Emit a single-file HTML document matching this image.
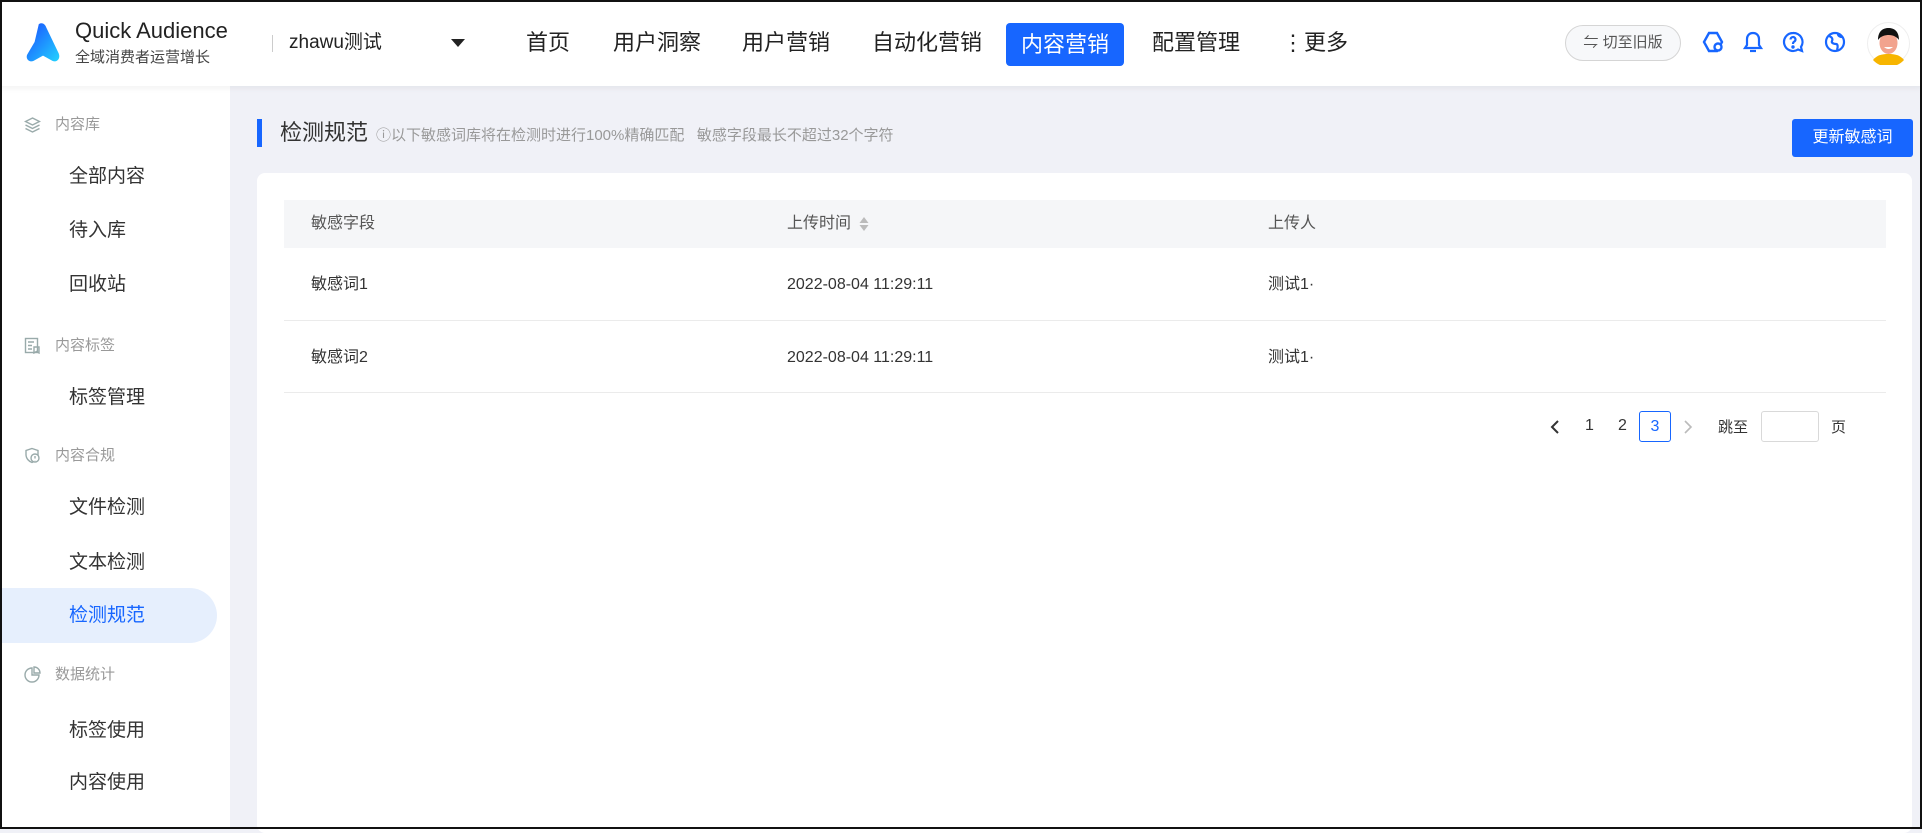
<!DOCTYPE html>
<html><head><meta charset="utf-8"><style>
*{margin:0;padding:0;box-sizing:border-box}
body{width:1922px;height:829px;overflow:hidden;font-family:"Liberation Sans","Noto Sans CJK SC",sans-serif;background:#f0f1f7;position:relative;color:#333}
.frame{position:absolute;inset:0;border:2px solid #111;z-index:50;pointer-events:none}
.hdr{position:absolute;left:0;top:0;width:1922px;height:86px;background:#fff;box-shadow:0 2px 6px rgba(0,0,0,.06);z-index:5}
.a{position:absolute;white-space:nowrap}
.nav{font-size:22px;color:#222;top:27px;line-height:32px}
.side{position:absolute;left:0;top:86px;width:230px;height:743px;background:#fff}
.g{position:absolute;left:55px;font-size:15px;color:#999;line-height:20px}
.gi{position:absolute;left:24px;width:17px;height:17px}
.it{position:absolute;left:69px;font-size:19px;color:#333;line-height:26px}
.card{position:absolute;left:257px;top:173px;width:1655px;height:660px;background:#fff;border-radius:8px}
.th{position:absolute;left:284px;top:200px;width:1602px;height:48px;background:#f5f6f8}
.t{position:absolute;font-size:16px;color:#333;line-height:20px}
.line{position:absolute;left:284px;width:1602px;height:1px;background:#ebebeb}
</style></head><body>
<div class="frame"></div>
<div class="hdr">
<svg class="a" style="left:22px;top:22px" width="42" height="42" viewBox="0 0 34 40"><defs><linearGradient id="lg" x1="0" y1="0" x2="1" y2="1"><stop offset="0" stop-color="#1a4dff"/><stop offset="1" stop-color="#22d3ff"/></linearGradient></defs><path d="M13 2c3-2 6 0 7 3l12 25c2 5-2 9-6 7l-9-5-9 5c-4 2-8-2-6-6l7-12z" fill="url(#lg)"/></svg>
<div class="a" style="left:75px;top:18px;font-size:22px;color:#222;line-height:26px">Quick Audience</div>
<div class="a" style="left:75px;top:48px;font-size:15px;color:#444;line-height:20px">全域消费者运营增长</div>
<div class="a" style="left:272px;top:35px;width:1px;height:17px;background:#ccc"></div>
<div class="a" style="left:289px;top:30px;font-size:19px;color:#222;line-height:26px">zhawu测试</div>
<div class="a" style="left:451px;top:39px;width:0;height:0;border-left:7px solid transparent;border-right:7px solid transparent;border-top:8px solid #222"></div>
<div class="a nav" style="left:526px">首页</div>
<div class="a nav" style="left:613px">用户洞察</div>
<div class="a nav" style="left:742px">用户营销</div>
<div class="a nav" style="left:872px">自动化营销</div>
<div class="a" style="left:1006px;top:23px;width:118px;height:43px;background:#1766ff;border-radius:4px;color:#fff;font-size:22px;text-align:center;line-height:43px">内容营销</div>
<div class="a nav" style="left:1152px">配置管理</div>
<div class="a nav" style="left:1282px">⋮更多</div>
<div class="a" style="left:1565px;top:25px;width:116px;height:36px;border:1px solid #d5d5d5;border-radius:18px;background:#f7f8fa;font-size:15px;color:#555;text-align:center;line-height:34px">⇋ 切至旧版</div>
<svg class="a" style="left:1702px;top:31px" width="22" height="22" viewBox="0 0 22 22" fill="none" stroke="#1766ff" stroke-width="2.4"><path d="M7 2h8l5 9-5 9H7L2 11z"/><circle cx="16" cy="16" r="3.5" fill="#fff"/></svg>
<svg class="a" style="left:1743px;top:31px" width="20" height="22" viewBox="0 0 20 22" fill="none" stroke="#1766ff" stroke-width="2.2"><path d="M10 2c-4 0-6 3-6 6v6l-2 3h16l-2-3V8c0-3-2-6-6-6z"/><path d="M7 20h6"/></svg>
<svg class="a" style="left:1782px;top:31px" width="22" height="22" viewBox="0 0 22 22" fill="none" stroke="#1766ff" stroke-width="2.2"><path d="M11 2a9 9 0 1 0 5 16.5l4 1.5-1-4A9 9 0 0 0 11 2z"/><path d="M8.5 8.5a2.5 2.5 0 1 1 3.5 2.3c-1 .5-1 1.2-1 2.2"/><circle cx="11" cy="16" r=".6" fill="#1766ff"/></svg>
<svg class="a" style="left:1824px;top:31px" width="22" height="22" viewBox="0 0 22 22" fill="none" stroke="#1766ff" stroke-width="2.2"><circle cx="11" cy="11" r="9"/><path d="M5 5c3 1 4 3 3 5s2 3 4 3 2 3 1 6M14 3c0 2 2 3 4 3"/></svg>
<svg class="a" style="left:1867px;top:22px" width="43" height="43" viewBox="0 0 43 43"><circle cx="21.5" cy="21.5" r="21" fill="#fff" stroke="#eee"/><path d="M6 38c4-5 9-6 15.5-6s11.5 1 15.5 6a21 21 0 0 1-31 0z" fill="#f7b500"/><ellipse cx="21.5" cy="21" rx="9" ry="11" fill="#f2a38e"/><path d="M11 18c0-9 5-12 10.5-12S32 9 32 18c-2-3-6-5-10-5s-8 1-11 5z" fill="#111"/><path d="M17 25q4.5 4 9 0" fill="#fff"/></svg>
</div>
<div class="side">
<svg class="gi" style="top:30px" viewBox="0 0 17 17" fill="none" stroke="#9aa" stroke-width="1.4"><path d="M8.5 2l7 3.5-7 3.5-7-3.5z"/><path d="M1.5 9l7 3.5 7-3.5M1.5 12.5l7 3.5 7-3.5"/></svg>
<div class="g" style="top:29px">内容库</div>
<div class="it" style="top:78px">全部内容</div>
<div class="it" style="top:132px">待入库</div>
<div class="it" style="top:186px">回收站</div>
<svg class="gi" style="top:251px" viewBox="0 0 17 17" fill="none" stroke="#9aa" stroke-width="1.4"><rect x="1.5" y="1.5" width="12" height="14"/><path d="M4 5h6M4 8.5h4M4 12h4M10 10h5v6l-2.5-1.5L10 16z"/></svg>
<div class="g" style="top:250px">内容标签</div>
<div class="it" style="top:299px">标签管理</div>
<svg class="gi" style="top:361px" viewBox="0 0 17 17" fill="none" stroke="#9aa" stroke-width="1.4"><path d="M8 1.5l6 2v4c0 4-3 7-6 8-3-1-6-4-6-8v-4z"/><circle cx="11" cy="11" r="4" fill="#fff"/><path d="M11 9v2.5M11 13v.3"/></svg>
<div class="g" style="top:360px">内容合规</div>
<div class="it" style="top:409px">文件检测</div>
<div class="it" style="top:464px">文本检测</div>
<div class="a" style="left:0;top:502px;width:217px;height:55px;background:#e6effd;border-radius:0 28px 28px 0"></div>
<div class="it" style="top:517px;color:#1766ff">检测规范</div>
<svg class="gi" style="top:580px" viewBox="0 0 17 17" fill="none" stroke="#9aa" stroke-width="1.4"><path d="M8 2a7 7 0 1 0 7 7H8z"/><path d="M10 1v6h6a6 6 0 0 0-6-6z"/></svg>
<div class="g" style="top:579px">数据统计</div>
<div class="it" style="top:632px">标签使用</div>
<div class="it" style="top:684px">内容使用</div>
</div>
<div class="a" style="left:257px;top:119px;width:5px;height:28px;background:#1766ff"></div>
<div class="a" style="left:280px;top:119px;font-size:22px;color:#333;line-height:28px">检测规范</div>
<div class="a" style="left:376px;top:126px;font-size:15px;color:#999;line-height:20px">ⓘ以下敏感词库将在检测时进行100%精确匹配 &nbsp; 敏感字段最长不超过32个字符</div>
<div class="a" style="left:1792px;top:119px;width:121px;height:38px;background:#1766ff;border-radius:3px;color:#fff;font-size:16px;text-align:center;line-height:38px">更新敏感词</div>
<div class="card"></div>
<div class="th"></div>
<div class="t" style="left:311px;top:214px;color:#555">敏感字段</div>
<div class="t" style="left:787px;top:214px;color:#555">上传时间</div>
<svg class="a" style="left:858px;top:215px" width="12" height="18" viewBox="0 0 12 18" fill="#bbb"><path d="M6 2l4.5 6h-9zM6 16l4.5-6h-9z"/></svg>
<div class="t" style="left:1268px;top:214px;color:#555">上传人</div>
<div class="t" style="left:311px;top:275px">敏感词1</div>
<div class="t" style="left:787px;top:275px">2022-08-04 11:29:11</div>
<div class="t" style="left:1268px;top:275px">测试1·</div>
<div class="line" style="top:320px"></div>
<div class="t" style="left:311px;top:348px">敏感词2</div>
<div class="t" style="left:787px;top:348px">2022-08-04 11:29:11</div>
<div class="t" style="left:1268px;top:348px">测试1·</div>
<div class="line" style="top:392px"></div>
<svg class="a" style="left:1549px;top:419px" width="12" height="16" viewBox="0 0 12 16" fill="none" stroke="#333" stroke-width="2"><path d="M9 2L3 8l6 6"/></svg>
<div class="t" style="left:1585px;top:416px">1</div>
<div class="t" style="left:1618px;top:416px">2</div>
<div class="a" style="left:1639px;top:411px;width:32px;height:31px;border:1px solid #1766ff;border-radius:3px;color:#1766ff;font-size:16px;text-align:center;line-height:29px">3</div>
<svg class="a" style="left:1682px;top:419px" width="12" height="16" viewBox="0 0 12 16" fill="none" stroke="#bbb" stroke-width="1.6"><path d="M3 2l6 6-6 6"/></svg>
<div class="t" style="left:1718px;top:418px;font-size:15px">跳至</div>
<div class="a" style="left:1761px;top:411px;width:58px;height:31px;border:1px solid #d9d9d9;border-radius:3px"></div>
<div class="t" style="left:1831px;top:418px;font-size:15px">页</div>
</body></html>
